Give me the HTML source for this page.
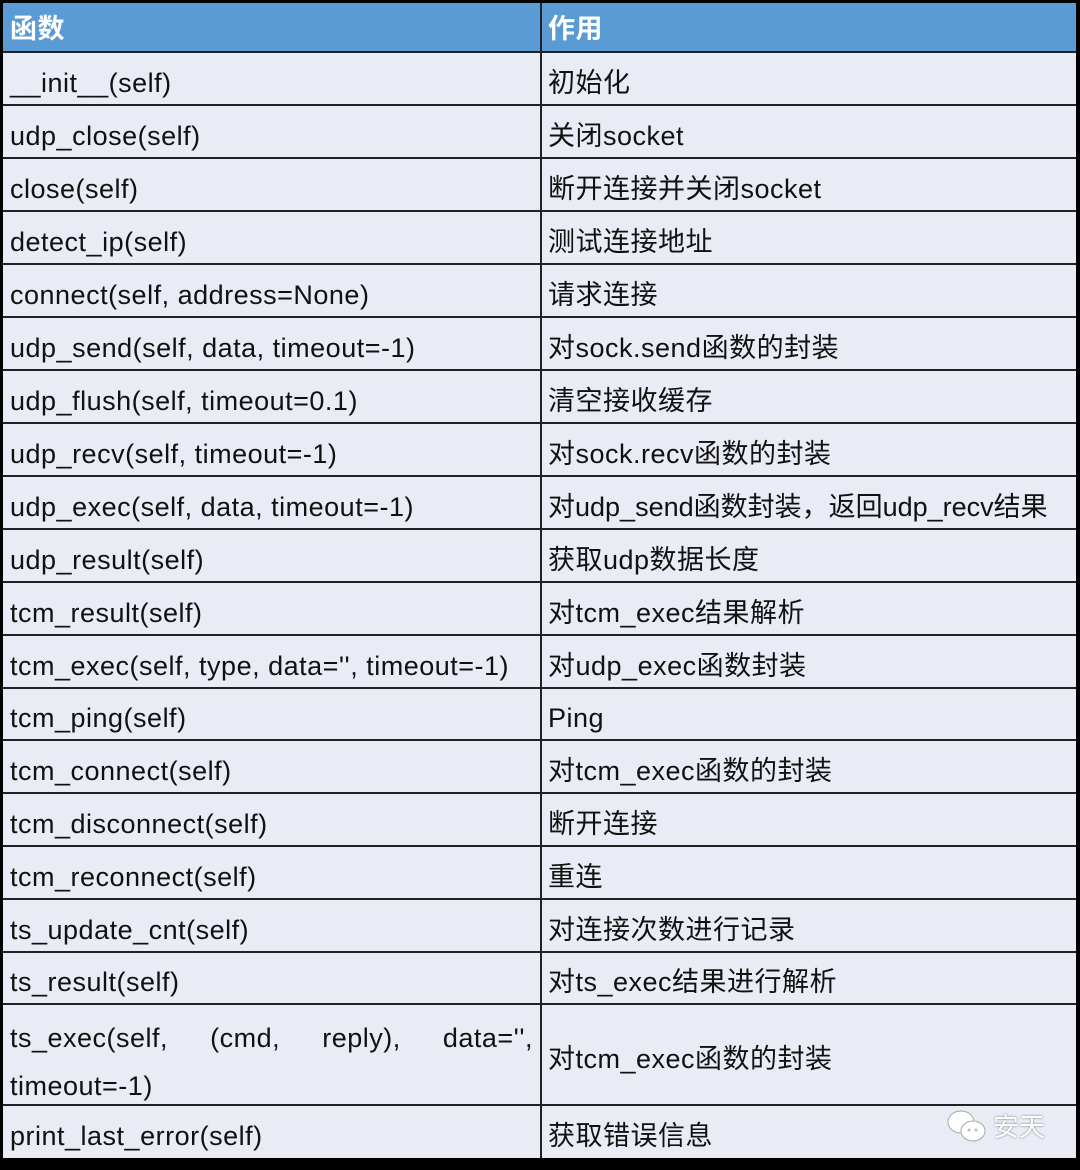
<!DOCTYPE html>
<html><head><meta charset="utf-8"><style>
html,body{margin:0;padding:0;background:#000;width:1080px;height:1170px;overflow:hidden}
body{position:relative;font-family:"Liberation Sans","Noto Sans CJK SC",sans-serif;color:#111}
.r{position:absolute;left:3px;width:1073px;background:#e9ebf5;border-bottom:2px solid #222;box-sizing:border-box}
.c{position:absolute;top:0;bottom:0;display:flex;align-items:center;font-size:27px;letter-spacing:0.5px;white-space:nowrap;line-height:1;padding-top:9px;box-sizing:border-box}
.a{left:7px;width:527px}
.b{left:545px;width:527px}
.h{background:#5b9bd5;color:#fff;font-weight:bold}
.h .c{padding-top:4px}
.v{position:absolute;left:540px;top:3px;width:2px;height:1155px;background:#222}
</style></head><body>
<div class="r h" style="top:3px;height:50px"><div class="c a">函数</div><div class="c b">作用</div></div>
<div class="r" style="top:53px;height:53px"><div class="c a">__init__(self)</div><div class="c b">初始化</div></div>
<div class="r" style="top:106px;height:53px"><div class="c a">udp_close(self)</div><div class="c b">关闭socket</div></div>
<div class="r" style="top:159px;height:53px"><div class="c a">close(self)</div><div class="c b">断开连接并关闭socket</div></div>
<div class="r" style="top:212px;height:53px"><div class="c a">detect_ip(self)</div><div class="c b">测试连接地址</div></div>
<div class="r" style="top:265px;height:53px"><div class="c a">connect(self, address=None)</div><div class="c b">请求连接</div></div>
<div class="r" style="top:318px;height:53px"><div class="c a">udp_send(self, data, timeout=-1)</div><div class="c b">对sock.send函数的封装</div></div>
<div class="r" style="top:371px;height:53px"><div class="c a">udp_flush(self, timeout=0.1)</div><div class="c b">清空接收缓存</div></div>
<div class="r" style="top:424px;height:53px"><div class="c a">udp_recv(self, timeout=-1)</div><div class="c b">对sock.recv函数的封装</div></div>
<div class="r" style="top:477px;height:53px"><div class="c a">udp_exec(self, data, timeout=-1)</div><div class="c b" style="letter-spacing:0">对udp_send函数封装，返回udp_recv结果</div></div>
<div class="r" style="top:530px;height:53px"><div class="c a">udp_result(self)</div><div class="c b">获取udp数据长度</div></div>
<div class="r" style="top:583px;height:53px"><div class="c a">tcm_result(self)</div><div class="c b">对tcm_exec结果解析</div></div>
<div class="r" style="top:636px;height:53px"><div class="c a">tcm_exec(self, type, data='', timeout=-1)</div><div class="c b">对udp_exec函数封装</div></div>
<div class="r" style="top:689px;height:52px"><div class="c a">tcm_ping(self)</div><div class="c b">Ping</div></div>
<div class="r" style="top:741px;height:53px"><div class="c a">tcm_connect(self)</div><div class="c b">对tcm_exec函数的封装</div></div>
<div class="r" style="top:794px;height:53px"><div class="c a">tcm_disconnect(self)</div><div class="c b">断开连接</div></div>
<div class="r" style="top:847px;height:53px"><div class="c a">tcm_reconnect(self)</div><div class="c b">重连</div></div>
<div class="r" style="top:900px;height:53px"><div class="c a">ts_update_cnt(self)</div><div class="c b">对连接次数进行记录</div></div>
<div class="r" style="top:953px;height:52px"><div class="c a">ts_result(self)</div><div class="c b">对ts_exec结果进行解析</div></div>
<div class="r" style="top:1005px;height:101px">
<div style="position:absolute;left:7px;width:523px;top:20px;font-size:27px;letter-spacing:0.5px;line-height:1;text-align:justify;text-align-last:justify;white-space:normal">ts_exec(self, (cmd, reply), data='',</div>
<div style="position:absolute;left:7px;top:68px;font-size:27px;letter-spacing:0.5px;line-height:1;white-space:nowrap">timeout=-1)</div>
<div class="c b">对tcm_exec函数的封装</div></div>
<div class="r" style="top:1106px;height:52px;border-bottom:none"><div class="c a">print_last_error(self)</div><div class="c b">获取错误信息</div>
<div style="position:absolute;left:990px;top:6px;font-size:26px;color:#fff;text-shadow:0 0 2px #777;line-height:30px">
<svg width="44" height="36" viewBox="0 0 44 36" style="position:absolute;left:-48px;top:-4px"><ellipse cx="16" cy="14" rx="13" ry="11" fill="#fff" stroke="#aaa"/><ellipse cx="28" cy="23" rx="12" ry="10" fill="#fff" stroke="#aaa"/><circle cx="24" cy="22" r="1.5" fill="#bbb"/><circle cx="31" cy="22" r="1.5" fill="#bbb"/></svg>安天</div></div>
<div class="v"></div>
</body></html>
